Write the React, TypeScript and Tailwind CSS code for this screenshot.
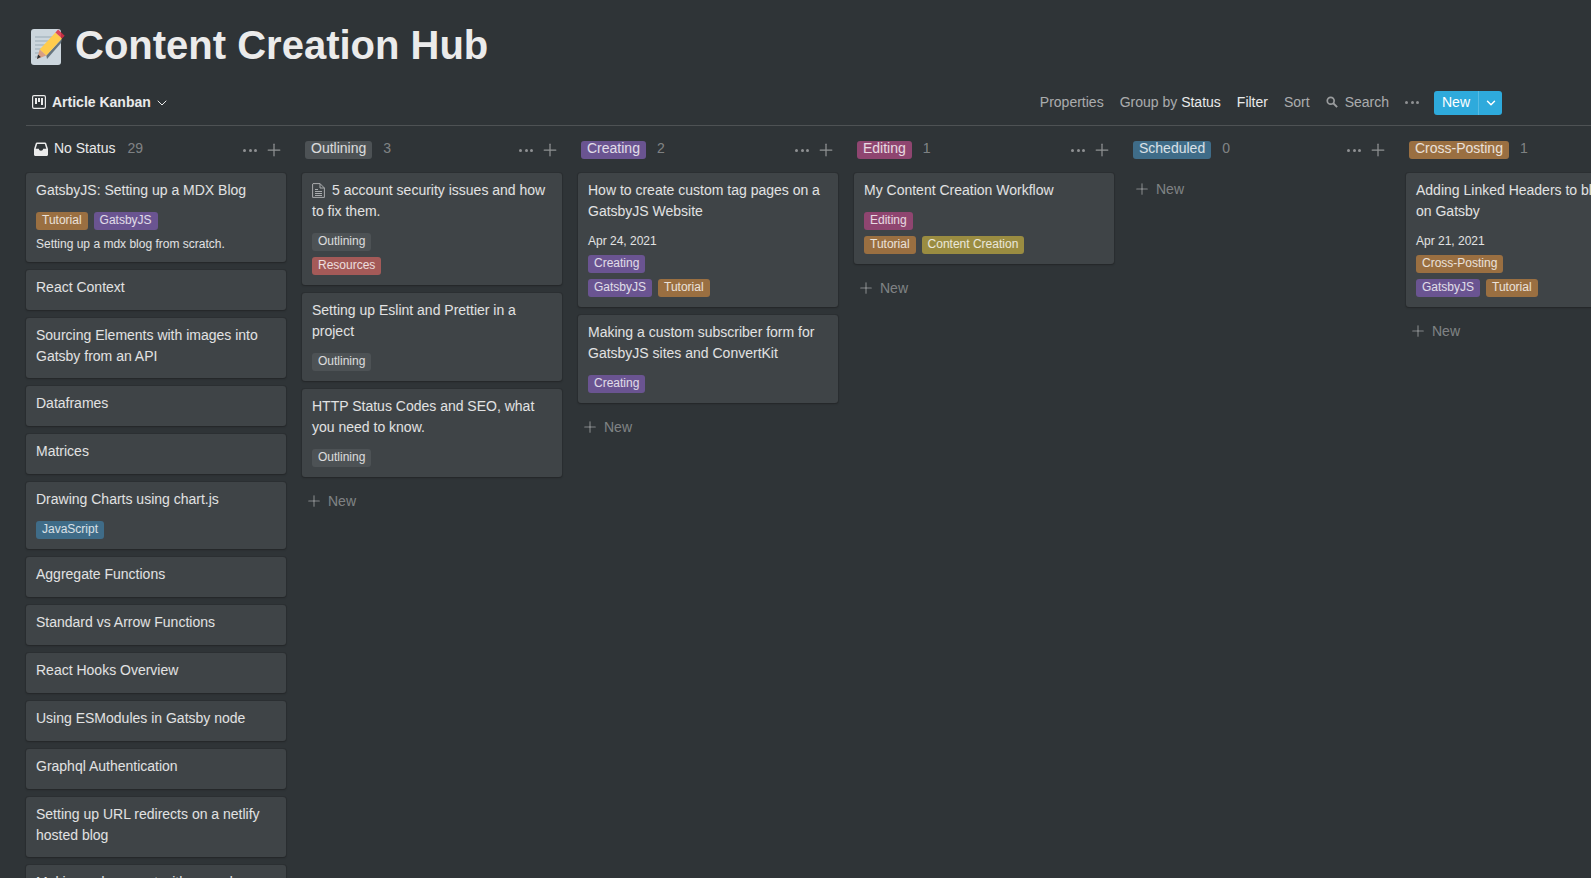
import { ChevronDown, Plus } from 'lucide-react';

type TagName =
  | 'Tutorial'
  | 'GatsbyJS'
  | 'JavaScript'
  | 'Outlining'
  | 'Resources'
  | 'Creating'
  | 'Editing'
  | 'Content Creation'
  | 'Scheduled'
  | 'Cross-Posting';

const tagColors: Record<TagName, string> = {
  Tutorial: 'bg-[#9a6f41]',
  GatsbyJS: 'bg-[#6a5491]',
  JavaScript: 'bg-[#3f6c88]',
  Outlining: 'bg-[#4d5255]',
  Resources: 'bg-[#a45a58]',
  Creating: 'bg-[#6a5491]',
  Editing: 'bg-[#8f4570]',
  'Content Creation': 'bg-[#9a8c41]',
  Scheduled: 'bg-[#3f6c88]',
  'Cross-Posting': 'bg-[#9a6f41]',
};

interface CardData {
  title: string;
  page?: boolean;
  date?: string;
  rows?: TagName[][];
  note?: string;
}

interface ColumnData {
  name: string;
  tag?: TagName;
  count: number;
  cards: CardData[];
  showNew?: boolean;
}

const columns: ColumnData[] = [
  {
    name: 'No Status',
    count: 29,
    cards: [
      {
        title: 'GatsbyJS: Setting up a MDX Blog',
        rows: [['Tutorial', 'GatsbyJS']],
        note: 'Setting up a mdx blog from scratch.',
      },
      { title: 'React Context' },
      { title: 'Sourcing Elements with images into Gatsby from an API' },
      { title: 'Dataframes' },
      { title: 'Matrices' },
      { title: 'Drawing Charts using chart.js', rows: [['JavaScript']] },
      { title: 'Aggregate Functions' },
      { title: 'Standard vs Arrow Functions' },
      { title: 'React Hooks Overview' },
      { title: 'Using ESModules in Gatsby node' },
      { title: 'Graphql Authentication' },
      { title: 'Setting up URL redirects on a netlify hosted blog' },
      { title: 'Making a document with a seed' },
    ],
  },
  {
    name: 'Outlining',
    tag: 'Outlining',
    count: 3,
    showNew: true,
    cards: [
      {
        title: '5 account security issues and how to fix them.',
        page: true,
        rows: [['Outlining'], ['Resources']],
      },
      { title: 'Setting up Eslint and Prettier in a project', rows: [['Outlining']] },
      { title: 'HTTP Status Codes and SEO, what you need to know.', rows: [['Outlining']] },
    ],
  },
  {
    name: 'Creating',
    tag: 'Creating',
    count: 2,
    showNew: true,
    cards: [
      {
        title: 'How to create custom tag pages on a GatsbyJS Website',
        date: 'Apr 24, 2021',
        rows: [['Creating'], ['GatsbyJS', 'Tutorial']],
      },
      {
        title: 'Making a custom subscriber form for GatsbyJS sites and ConvertKit',
        rows: [['Creating']],
      },
    ],
  },
  {
    name: 'Editing',
    tag: 'Editing',
    count: 1,
    showNew: true,
    cards: [
      {
        title: 'My Content Creation Workflow',
        rows: [['Editing'], ['Tutorial', 'Content Creation']],
      },
    ],
  },
  { name: 'Scheduled', tag: 'Scheduled', count: 0, showNew: true, cards: [] },
  {
    name: 'Cross-Posting',
    tag: 'Cross-Posting',
    count: 1,
    showNew: true,
    cards: [
      {
        title: 'Adding Linked Headers to blog posts on Gatsby',
        date: 'Apr 21, 2021',
        rows: [['Cross-Posting'], ['GatsbyJS', 'Tutorial']],
      },
    ],
  },
];

const MemoIcon = () => (
  <svg viewBox="0 0 35 36" className="w-[35px] h-[36px] shrink-0 mt-[4px]">
    <rect x="0" y="0" width="30" height="36" rx="3" fill="#ccd6dd" />
    <path d="M4 8h22M4 12h22M4 16h16M4 20h12M4 24h8M4 28h6" stroke="#99aab5" strokeWidth="1" />
    <path d="M15.300 26.600L31 9.600 30 14 16 30z" fill="#66757f" />
    <path d="M8.700 20.500L24.400 3.500 31 9.600 15.300 26.600z" fill="#ffcc4d" />
    <path d="M24.400 3.500L27.100.5 33.700 6.700 31 9.600z" fill="#dd2e44" opacity="0.85" />
    <path d="M8.700 20.500L15.300 26.600 6 30z" fill="#d99e82" />
    <path d="M7 25.500L9.800 28 6 30z" fill="#292f33" />
  </svg>
);

const BoardIcon = () => (
  <svg viewBox="0 0 14 14" className="w-[14px] h-[14px] shrink-0 text-[#ebebeb]">
    <rect x="0.6" y="0.6" width="12.8" height="12.8" rx="1.4" fill="none" stroke="currentColor" strokeWidth="1.2" />
    <path d="M3 3h2v6H3zM6 3h2v4H6zM9 3h2v7H9z" fill="currentColor" />
  </svg>
);

const InboxIcon = () => (
  <svg viewBox="0 0 14 14" className="w-[14px] h-[14px] shrink-0 mt-[2px]">
    <path
      d="M3 0.500h8c.6 0 1 .3 1.200.8L14 7v5.500c0 .8-.6 1.500-1.500 1.500h-11C.6 14 0 13.300 0 12.500V7l1.800-5.700C2 .8 2.400.5 3 .5zM3.200 2L1.700 6.800H4.800C5 8 5.800 8.800 7 8.800S9 8 9.200 6.800h3.100L10.800 2z"
      fill="#ebebeb"
      fillRule="evenodd"
    />
  </svg>
);

const PageIcon = () => (
  <svg viewBox="0 0 13 15" className="w-[13px] h-[15px] inline-block align-[-3px] mr-[7px]">
    <path d="M1 .6h7L12.400 5v9.400H.6V1z" fill="none" stroke="#a9abad" strokeWidth="1" />
    <path d="M8 .6V5h4.400" fill="none" stroke="#a9abad" strokeWidth="1" />
    <path d="M3 6.500h3M3 8.500h7M3 10.500h7M3 12.500h7" stroke="#a9abad" strokeWidth="1" />
  </svg>
);

const SearchIcon = () => (
  <svg viewBox="0 0 14 14" className="w-[12px] h-[12px] shrink-0">
    <circle cx="5.500" cy="5.500" r="4" fill="none" stroke="#9a9c9e" strokeWidth="2" />
    <path d="M8.500 8.500L13 13" stroke="#9a9c9e" strokeWidth="2.200" />
  </svg>
);

const Dots = () => (
  <span className="flex items-center gap-[2.500px] w-[14px]">
    <span className="w-[3px] h-[3px] rounded-full bg-[#8f9193]" />
    <span className="w-[3px] h-[3px] rounded-full bg-[#8f9193]" />
    <span className="w-[3px] h-[3px] rounded-full bg-[#8f9193]" />
  </span>
);

const Tag = ({ name }: { name: TagName }) => (
  <span className={`h-[18px] leading-[16px] px-[6px] rounded-[3px] text-xs whitespace-nowrap text-white/80 ${tagColors[name]}`}>
    {name}
  </span>
);

const Card = ({ card }: { card: CardData }) => (
  <div className="mb-2 min-h-[40px] bg-[#3f4447] rounded-[3px] shadow-[0_1px_2px_rgba(15,15,15,0.3),0_0_0_1px_rgba(15,15,15,0.1)] px-[10px] pt-[7px] pb-[10px] shrink-0">
    <div className={`text-sm leading-[21px] text-white/85 ${card.rows ? '' : 'mb-[1px]'}`}>
      {card.page && <PageIcon />}
      {card.title}
    </div>
    {card.date && <div className="text-xs leading-[18px] mt-[10px] text-white/85">{card.date}</div>}
    {card.rows && (
      <div className={`flex flex-col gap-[6px] ${card.date ? 'mt-[5px]' : 'mt-[11px]'}`}>
        {card.rows.map((row, i) => (
          <div key={i} className="flex gap-[6px]">
            {row.map((t) => (
              <Tag key={t} name={t} />
            ))}
          </div>
        ))}
      </div>
    )}
    {card.note && <div className="text-xs leading-[18px] mt-[5px] -mb-[1px] text-white/85">{card.note}</div>}
  </div>
);

const Column = ({ column }: { column: ColumnData }) => (
  <div className="w-[260px] shrink-0 flex flex-col">
    <div className="h-[47px] flex items-center pl-2 pr-[2px] pb-[3px] shrink-0">
      {column.tag ? (
        <span className={`-ml-[5px] mt-[3px] h-[18px] leading-[14px] px-[6px] rounded-[3px] text-sm whitespace-nowrap text-white/80 ${tagColors[column.tag]}`}>
          {column.name}
        </span>
      ) : (
        <span className="flex items-center gap-[6px] text-sm leading-[18px] text-white/90">
          <InboxIcon />
          {column.name}
        </span>
      )}
      <span className={`text-sm leading-[18px] text-white/40 ${column.tag ? 'ml-[11px]' : 'ml-3'}`}>{column.count}</span>
      <span className="ml-auto mt-[4px] flex items-center gap-[7px]">
        <Dots />
        <Plus className="w-5 h-5 text-[#8f9193]" strokeWidth={1.500} />
      </span>
    </div>
    {column.cards.map((c) => (
      <Card key={c.title} card={c} />
    ))}
    {column.showNew && (
      <div className="h-[31px] flex items-center gap-[5px] pl-[3px] text-sm text-white/40">
        <Plus className="w-[18px] h-[18px]" strokeWidth={1.500} />
        New
      </div>
    )}
  </div>
);

export default function App() {
  return (
    <div className="h-screen overflow-hidden bg-[#2f3437] font-['Liberation_Sans',Arial,sans-serif] text-white/90 pl-[26px]">
      <div className="h-[89px] flex items-center gap-[9px] pl-[5px]">
        <MemoIcon />
        <h1 className="text-[40px] leading-[48px] font-bold text-[#ebebeb] whitespace-nowrap">Content Creation Hub</h1>
      </div>
      <div className="h-[37px] flex items-center justify-between pr-[89px] pb-[10px] border-b border-white/15">
        <div className="flex items-center gap-[6px] pl-[6px] text-sm font-bold text-white/90">
          <BoardIcon />
          Article Kanban
          <ChevronDown className="w-4 h-4 -ml-[3px] mt-[1px]" strokeWidth={1.500} />
        </div>
        <div className="flex items-center gap-4 text-sm text-white/60">
          <span>Properties</span>
          <span>
            Group by <span className="text-white/90">Status</span>
          </span>
          <span className="text-white/90">Filter</span>
          <span>Sort</span>
          <span className="flex items-center gap-[7px]">
            <SearchIcon />
            Search
          </span>
          <Dots />
          <div className="flex h-[24px] w-[68px] mt-[2px] -ml-[1px] rounded-[3px] overflow-hidden bg-[#2eaadc] text-white">
            <span className="w-[44px] pl-2 leading-[22px]">New</span>
            <span className="w-[24px] flex items-center justify-center border-l border-white/20">
              <ChevronDown className="w-[14px] h-[14px]" strokeWidth={2.500} />
            </span>
          </div>
        </div>
      </div>
      <div className="flex gap-4">
        {columns.map((col) => (
          <Column key={col.name} column={col} />
        ))}
      </div>
    </div>
  );
}
